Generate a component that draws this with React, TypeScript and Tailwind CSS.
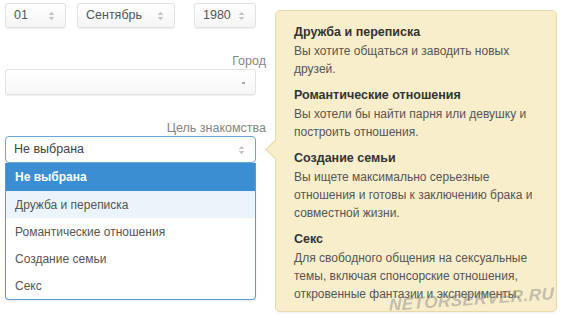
import React from 'react';

const font = { fontFamily: '"Liberation Sans", Arial, sans-serif' };

const Caret: React.FC = () => (
  <svg width="7" height="10" viewBox="0 0 7 10" className="shrink-0">
    <path d="M3.5 0.8 L6.2 4 H0.8 Z" fill="#c2c2c2" />
    <path d="M3.5 9.2 L6.2 6 H0.8 Z" fill="#c2c2c2" />
  </svg>
);

const Select: React.FC<{ value: string; className?: string }> = ({ value, className }) => (
  <div
    className={`h-[25px] flex items-center justify-between pl-[8px] pr-[10px] bg-gradient-to-b from-white to-[#f5f5f5] border border-[#e2e2e2] rounded-[3px] shadow-[0_1px_1px_rgba(0,0,0,0.07)] text-[12.5px] text-[#555] ${className || ''}`}
  >
    <span>{value}</span>
    <Caret />
  </div>
);

const options = ['Не выбрана', 'Дружба и переписка', 'Романтические отношения', 'Создание семьи', 'Секс'];

const tips = [
  { title: 'Дружба и переписка', lines: ['Вы хотите общаться и заводить новых', 'друзей.'] },
  { title: 'Романтические отношения', lines: ['Вы хотели бы найти парня или девушку и', 'построить отношения.'] },
  {
    title: 'Создание семьи',
    lines: ['Вы ищете максимально серьезные', 'отношения и готовы к заключению брака и', 'совместной жизни.'],
  },
  {
    title: 'Секс',
    lines: ['Для свободного общения на сексуальные', 'темы, включая спонсорские отношения,', 'откровенные фантазии и эксперименты.'],
  },
];

export default function App() {
  return (
    <div className="w-[561px] h-[319px] bg-white relative flex overflow-hidden" style={font}>
      {/* form column */}
      <div className="w-[266px] pl-[5px] pt-[3px] flex flex-col">
        <div className="flex">
          <Select value="01" className="w-[61px]" />
          <Select value="Сентябрь" className="w-[98px] ml-[11px]" />
          <Select value="1980" className="w-[62px] ml-[19px]" />
        </div>

        <div className="mt-[25px] text-right text-[12.5px] leading-[16px] text-[#858585]">Город</div>
        <div className="w-[251px] h-[26px] flex items-center justify-end pr-[10px] bg-gradient-to-b from-white to-[#f6f6f6] border border-[#e2e2e2] rounded-[3px] shadow-[0_1px_1px_rgba(0,0,0,0.07)]">
          <span className="w-[3px] h-[2px] bg-[#aaa] mt-[1px]" />
        </div>

        <div className="mt-[25px] text-right text-[12.5px] leading-[16px] text-[#858585]">Цель знакомства</div>
        <div className="w-[251px]">
          <div className="h-[27px] flex items-center justify-between pl-[8px] pr-[10px] bg-white border border-[#6aa5d8] rounded-[4px] text-[12.5px] text-[#444]">
            <span>Не выбрана</span>
            <Caret />
          </div>
          <div className="border border-t-0 border-[#5b9bd1] rounded-b-[4px] overflow-hidden text-[12px] shadow-[0_1px_2px_rgba(0,0,0,0.08)]">
            {options.map((o, i) => (
              <div
                key={o}
                className={`flex items-center pl-[9px] ${
                  i === 0
                    ? 'h-[28px] bg-[#3a8ed1] text-white font-bold'
                    : i === 1
                    ? 'h-[27px] bg-[#ecf4fb] text-[#555]'
                    : 'h-[27px] text-[#555]'
                }`}
              >
                {o}
              </div>
            ))}
          </div>
        </div>
      </div>

      {/* popover */}
      <div className="relative ml-[9px] mt-[10px] w-[282px] h-[302px] bg-[#f9eecb] border border-[#e8daa8] rounded-[5px] pl-[18px] pt-[12px] shadow-[0_1px_2px_rgba(0,0,0,0.06)]">
        <div className="absolute left-[-8px] top-[132px] w-[13px] h-[13px] rotate-45 bg-[#f9eecb] border-l border-b border-[#e8daa8]" />
        {tips.map(t => (
          <div key={t.title} className="mb-[8px] relative">
            <div className="font-bold text-[#333] text-[12.5px] leading-[18px] mb-[1px]">{t.title}</div>
            {t.lines.map(l => (
              <div key={l} className="text-[#555] text-[12px] leading-[18px] whitespace-nowrap">
                {l}
              </div>
            ))}
          </div>
        ))}
        <div
          className="absolute right-[2px] bottom-[1px] text-[17px] leading-[20px] font-bold italic text-[#7f7f7f]/45 tracking-[0.5px] skew-y-[-4deg]"
          style={{ fontFamily: '"Liberation Sans", Arial, sans-serif' }}
        >
          NETORSERVER.RU
        </div>
      </div>
    </div>
  );
}
